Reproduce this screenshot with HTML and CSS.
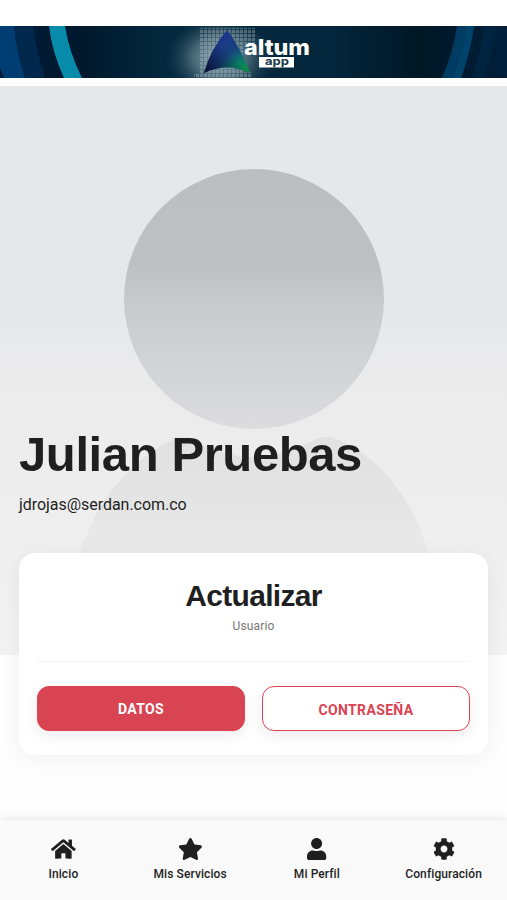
FILE: index.html
```html
<!DOCTYPE html>
<html lang="es">
<head>
    <meta charset="UTF-8">
    <meta name="viewport" content="width=device-width, initial-scale=1.0">
    <title>Altum App - Mi Perfil</title>
    <link rel="stylesheet" href="styles.css">
</head>
<body>
    <header class="header">
        <svg class="banner" viewBox="0 0 507 52" preserveAspectRatio="none">
            <defs>
                <linearGradient id="fondo">
                    <stop offset="0" stop-color="#001d3a"/>
                    <stop offset=".16" stop-color="#00182c"/>
                    <stop offset=".33" stop-color="#04293e"/>
                    <stop offset=".65" stop-color="#04263c"/>
                    <stop offset=".83" stop-color="#001725"/>
                    <stop offset="1" stop-color="#001f3b"/>
                </linearGradient>
                <radialGradient id="brillo">
                    <stop offset="0" stop-color="#b4c8ce" stop-opacity=".8"/>
                    <stop offset=".5" stop-color="#7f9ca6" stop-opacity=".55"/>
                    <stop offset="1" stop-color="#305062" stop-opacity="0"/>
                </radialGradient>
                <linearGradient id="triangulo" x1=".3" y1=".3" x2=".85" y2="1">
                    <stop offset="0" stop-color="#1c3687"/>
                    <stop offset=".4" stop-color="#17447c"/>
                    <stop offset=".7" stop-color="#0b7968"/>
                    <stop offset="1" stop-color="#079348"/>
                </linearGradient>
                <linearGradient id="sombra" x1="0" y1="1" x2=".5" y2=".5">
                    <stop offset="0" stop-color="#090c33"/>
                    <stop offset="1" stop-color="#090c33" stop-opacity="0"/>
                </linearGradient>
                <pattern id="puntos" width="4" height="4" patternUnits="userSpaceOnUse">
                    <rect width="3" height="3" fill="#b6c6ce" opacity=".35"/>
                </pattern>
            </defs>
            <rect width="507" height="52" fill="url(#fondo)"/>
            <path d="M0 0H14Q17 27 25 52H4L0 42Z" fill="#003d72"/>
            <path d="M14 0H33Q37 27 45 52H25Q17 27 14 0Z" fill="#00284c"/>
            <path d="M49 0H65Q69 26 82 52H64Q52 26 49 0Z" fill="#078baa"/>
            <path d="M457 0H474Q470 27 461 52H442Q453 27 457 0Z" fill="#003b62"/>
            <path d="M467 0H474Q470 27 461 52H453Q463 27 467 0Z" fill="#00446d"/>
            <path d="M484 0H498Q493 27 483 52H471Q481 27 484 0Z" fill="#002340"/>
            <ellipse cx="220" cy="32" rx="54" ry="42" fill="url(#brillo)"/>
            <path d="M200 2H255V18H244V46H252V52H194V48H200Z" fill="url(#puntos)"/>
            <path d="M227 4Q241 22 250 47Q227 36 204 47Q211 22 227 4Z" fill="url(#triangulo)"/>
            <path d="M227 4Q241 22 250 47Q227 36 204 47Q211 22 227 4Z" fill="url(#sombra)"/>
            <text class="logo-name" x="244" y="29" textLength="66" lengthAdjust="spacingAndGlyphs">altum</text>
            <rect x="259" y="31" width="35" height="10.5" fill="#fff"/>
            <text class="logo-app" x="265" y="38.5" textLength="24" lengthAdjust="spacingAndGlyphs">app</text>
        </svg>
    </header>

    <main class="profile">
        <svg class="avatar" viewBox="0 0 507 569">
            <defs>
                <linearGradient id="cabeza" x1="0" y1="0" x2="0" y2="1">
                    <stop offset="0" stop-color="#bcbdc0"/>
                    <stop offset=".38" stop-color="#bec0c2"/>
                    <stop offset=".52" stop-color="#c9cacc"/>
                    <stop offset=".75" stop-color="#d2d3d5"/>
                    <stop offset="1" stop-color="#dcdcde"/>
                </linearGradient>
                <linearGradient id="cuerpo" x1="0" y1="0" x2="0" y2="1">
                    <stop offset="0" stop-color="#e1e1e2"/>
                    <stop offset=".3" stop-color="#e4e4e4"/>
                    <stop offset=".55" stop-color="#ebebeb"/>
                    <stop offset="1" stop-color="#f2f2f2"/>
                </linearGradient>
            </defs>
            <path d="M62 569C66 470 100 390 172 354Q181 349 192 354Q254 388 314 354Q324 348 336 353C402 380 440 455 445 569Z" fill="url(#cuerpo)"/>
            <circle cx="254" cy="213" r="130" fill="url(#cabeza)"/>
        </svg>

        <h1 class="name">Julian Pruebas</h1>
        <p class="email">jdrojas@serdan.com.co</p>

        <section class="card">
            <h2 class="card-title">Actualizar</h2>
            <p class="card-subtitle">Usuario</p>
            <hr>
            <div class="buttons">
                <button class="btn btn-primary">DATOS</button>
                <button class="btn btn-outline">CONTRASEÑA</button>
            </div>
        </section>
    </main>

    <nav class="menu">
        <a class="menu-item">
            <svg viewBox="0 0 576 512"><path d="M280.37 148.26L96 300.11V464a16 16 0 0 0 16 16l112.06-.29a16 16 0 0 0 15.92-16V368a16 16 0 0 1 16-16h64a16 16 0 0 1 16 16v95.64a16 16 0 0 0 16 16.05L464 480a16 16 0 0 0 16-16V300L295.67 148.26a12.19 12.19 0 0 0-15.3 0zM571.6 251.47L488 182.56V44.05a12 12 0 0 0-12-12h-56a12 12 0 0 0-12 12v72.61L318.47 43a48 48 0 0 0-61 0L4.34 251.47a12 12 0 0 0-1.6 16.9l25.5 31A12 12 0 0 0 45.15 301l235.22-193.74a12.19 12.19 0 0 1 15.3 0L530.9 301a12 12 0 0 0 16.9-1.6l25.5-31a12 12 0 0 0-1.7-16.93z"/></svg>
            <span>Inicio</span>
        </a>
        <a class="menu-item">
            <svg viewBox="0 0 576 512"><path d="M259.3 17.8L194 150.2 47.9 171.5c-26.2 3.8-36.7 36.1-17.7 54.6l105.7 103-25 145.5c-4.5 26.3 23.2 46 46.4 33.7L288 439.6l130.7 68.7c23.2 12.2 50.9-7.4 46.4-33.7l-25-145.5 105.7-103c19-18.5 8.5-50.8-17.7-54.6L382 150.2 316.7 17.8c-11.7-23.6-45.6-23.9-57.4 0z"/></svg>
            <span>Mis Servicios</span>
        </a>
        <a class="menu-item">
            <svg viewBox="0 0 448 512"><path d="M224 256c70.7 0 128-57.3 128-128S294.7 0 224 0 96 57.3 96 128s57.3 128 128 128zm89.6 32h-16.7c-22.2 10.2-46.9 16-72.9 16s-50.6-5.8-72.9-16h-16.7C60.2 288 0 348.2 0 422.4V464c0 26.5 21.5 48 48 48h352c26.5 0 48-21.5 48-48v-41.6c0-74.2-60.2-134.4-134.4-134.4z"/></svg>
            <span>Mi Perfil</span>
        </a>
        <a class="menu-item">
            <svg viewBox="0 0 512 512"><path d="M487.4 315.7l-42.6-24.6c4.3-23.2 4.3-47 0-70.2l42.6-24.6c4.9-2.8 7.1-8.6 5.5-14-11.1-35.6-30-67.8-54.7-94.6-3.8-4.1-10-5.1-14.8-2.3L380.8 110c-17.9-15.4-38.5-27.3-60.8-35.1V25.8c0-5.6-3.9-10.5-9.4-11.7-36.7-8.2-74.3-7.8-109.2 0-5.5 1.2-9.4 6.1-9.4 11.7V75c-22.2 7.9-42.8 19.8-60.8 35.1L88.7 85.5c-4.9-2.8-11-1.9-14.8 2.3-24.7 26.7-43.6 58.9-54.7 94.6-1.7 5.4.6 11.2 5.5 14L67.3 221c-4.3 23.2-4.3 47 0 70.2l-42.6 24.6c-4.9 2.8-7.1 8.6-5.5 14 11.1 35.6 30 67.8 54.7 94.6 3.8 4.1 10 5.1 14.8 2.3l42.6-24.6c17.9 15.4 38.5 27.3 60.8 35.1v49.2c0 5.6 3.9 10.5 9.4 11.7 36.7 8.2 74.3 7.8 109.2 0 5.5-1.2 9.4-6.1 9.4-11.7v-49.2c22.2-7.9 42.8-19.8 60.8-35.1l42.6 24.6c4.9 2.8 11 1.9 14.8-2.3 24.7-26.7 43.6-58.9 54.7-94.6 1.5-5.5-.7-11.3-5.6-14.1zM256 336c-44.1 0-80-35.9-80-80s35.9-80 80-80 80 35.9 80 80-35.9 80-80 80z"/></svg>
            <span>Configuración</span>
        </a>
    </nav>
</body>
</html>
```
FILE: styles.css
```css
* {
    box-sizing: border-box;
}

body {
    margin: 0;
    height: 900px;
    display: flex;
    flex-direction: column;
    background-color: #fefefe;
    color: #1f1f1f;
    font-family: Roboto, sans-serif;
    overflow: hidden;
}

h1, h2, p {
    margin: 0;
}

.header {
    height: 86px;
    padding-top: 25.5px;
    background-color: white;
}

.banner {
    display: block;
    width: 100%;
    height: 52px;
}

.logo-name {
    font: 800 22px Inter, sans-serif;
    fill: white;
}

.logo-app {
    font: 700 11px Inter, sans-serif;
    fill: #17384b;
}

.profile {
    position: relative;
    flex: 1;
    padding: 339px 19px 0;
}

/* Fondo con la silueta del usuario */
.avatar {
    position: absolute;
    top: 0;
    left: 0;
    z-index: -1;
    width: 507px;
    height: 569px;
    background: linear-gradient(#e6e7e9 35%, #ebebec 52%, #eeeeee 75%, #f3f3f3);
}

.name {
    font: bold 49px/58px "Liberation Sans", Arial, sans-serif;
    letter-spacing: -0.4px;
    white-space: nowrap;
}

.email {
    margin-top: 12px;
    font-size: 16px;
    line-height: 20px;
    letter-spacing: -0.04px;
}

.card {
    height: 202px;
    margin-top: 38px;
    padding: 25px 18px 0;
    border-radius: 16px;
    background-color: white;
    box-shadow: 0 4px 24px rgba(0, 0, 0, 0.06);
    text-align: center;
}

.card-title {
    font: bold 30px/36px "Liberation Sans", Arial, sans-serif;
    letter-spacing: -0.7px;
}

.card-subtitle {
    margin-top: 4px;
    color: #777;
    font-size: 12px;
    line-height: 17px;
    letter-spacing: 0.15px;
}

hr {
    height: 1px;
    margin: 26px 0 24px;
    border: none;
    background-color: #f4f4f4;
}

.buttons {
    display: grid;
    grid-template-columns: 1fr 1fr;
    gap: 17px;
}

.btn {
    height: 45px;
    padding: 0;
    border: 1.5px solid #dc4453;
    border-radius: 12px;
    box-shadow: 0 5px 14px rgba(0, 0, 0, 0.08);
    font: 700 14px Roboto, sans-serif;
    letter-spacing: 0.35px;
}

.btn-primary {
    background-color: #d94452;
    color: white;
}

.btn-outline {
    padding-top: 2px;
    background-color: white;
    color: #da4453;
}

.menu {
    display: grid;
    grid-template-columns: repeat(4, 1fr);
    height: 80px;
    background-color: #f9f9f9;
    box-shadow: 0 0 10px rgba(0, 0, 0, 0.13);
}

.menu-item {
    display: flex;
    flex-direction: column;
    align-items: center;
    padding-top: 18px;
    font-size: 12px;
    font-weight: 500;
    line-height: 16px;
    letter-spacing: 0.1px;
}

.menu-item svg {
    height: 22px;
    margin-bottom: 6px;
    fill: #1f1f1f;
}
```
